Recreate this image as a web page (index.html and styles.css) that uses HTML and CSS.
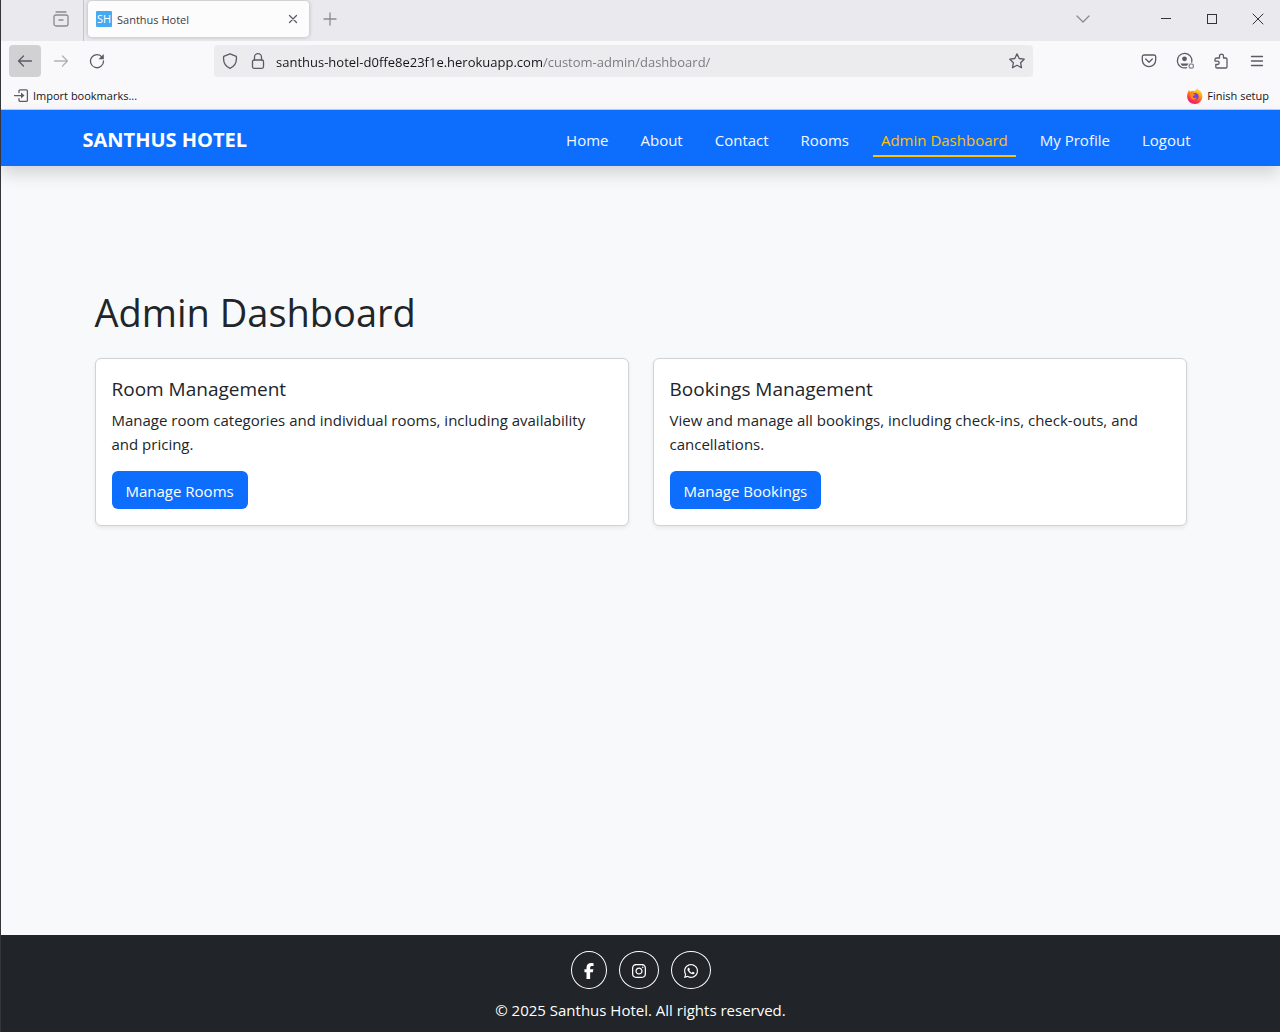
FILE: index.html
```html
<!DOCTYPE html>
<html lang="en">
<head>
<meta charset="utf-8">
<meta name="viewport" content="width=device-width, initial-scale=1">
<title>Santhus Hotel</title>
<link rel="stylesheet" href="styles.css">
</head>
<body>
<div class="browser">
  <div class="tabbar">
    <button class="view-btn" aria-label="Recent browsing"><svg class="icon muted" viewBox="0 0 16 16"><path d="M3 1H13"/><rect x="1" y="4" width="14" height="11" rx="2"/><path d="M6 9H10"/></svg></button>
    <div class="tab">
      <span class="favicon">SH</span>
      <span class="tab-title">Santhus Hotel</span>
      <button class="tab-close" aria-label="Close tab"><svg class="icon" viewBox="0 0 16 16"><path d="M4.500 4.500l7 7M11.500 4.500l-7 7"/></svg></button>
    </div>
    <button class="tool-btn" aria-label="New tab"><svg class="icon muted" viewBox="0 0 16 16"><path d="M8 2v12M2 8h12"/></svg></button>
    <button class="tool-btn list-btn" aria-label="List all tabs"><svg class="icon muted" viewBox="0 0 16 16"><path d="M2 5l6 6 6-6"/></svg></button>
    <div class="window-buttons">
      <button aria-label="Minimize"><svg class="icon crisp" viewBox="0 0 16 16"><path d="M3 7.500h10"/></svg></button>
      <button aria-label="Maximize"><svg class="icon crisp" viewBox="0 0 16 16"><rect x="3.500" y="3.500" width="9" height="9"/></svg></button>
      <button aria-label="Close"><svg class="icon thin" viewBox="0 0 16 16"><path d="M3 3l10 10M13 3L3 13"/></svg></button>
    </div>
  </div>
  <div class="toolbar">
    <div class="tools">
      <button class="tool-btn pressed" aria-label="Back"><svg class="icon" viewBox="0 0 16 16"><path d="M14.500 8H1.500M6.500 3L1.500 8l5 5"/></svg></button>
      <button class="tool-btn disabled" aria-label="Forward" disabled><svg class="icon" viewBox="0 0 16 16"><path d="M1.500 8h13M9.500 3l5 5-5 5"/></svg></button>
      <button class="tool-btn" aria-label="Reload"><svg class="icon" viewBox="0 0 16 16"><path d="M13.200 4.300A6.500 6.500 0 1 0 14.500 8"/><path class="solid" d="M14.800 1v5.300H9.500z"/></svg></button>
    </div>
    <div class="urlbar">
      <svg class="icon" viewBox="0 0 16 16"><path d="M8 .8l6.300 2.500c.7 5.500-1.500 10-6.300 12C3.200 13.300 1 8.800 1.700 3.300z"/></svg>
      <svg class="icon" viewBox="0 0 16 16"><rect x="2.500" y="7" width="11" height="8.300" rx="1.500"/><path d="M4.500 7V4.200a3.500 3.500 0 0 1 7 0V7"/></svg>
      <input class="url" type="text" aria-label="Address" value="santhus-hotel-d0ffe8e23f1e.herokuapp.com/custom-admin/dashboard/">
      <svg class="icon" viewBox="0 0 16 16"><path d="M8 .9l2.200 4.600 5 .7-3.600 3.500.9 5L8 12.300l-4.500 2.400.9-5L.8 6.200l5-.7z"/></svg>
    </div>
    <div class="tools">
      <button class="tool-btn" aria-label="Save to Pocket"><svg class="icon" viewBox="0 0 16 16"><path d="M3 2h10a1.700 1.700 0 0 1 1.700 1.700V7a6.700 6.700 0 0 1-13.400 0V3.700A1.700 1.700 0 0 1 3 2z"/><path d="M4.700 6L8 9.200 11.300 6"/></svg></button>
      <button class="tool-btn" aria-label="Account"><svg class="icon account" viewBox="0 0 18 18"><path d="M10.500 15.700A7.300 7.300 0 1 1 15.800 10"/><circle class="solid" cx="8.500" cy="6.800" r="2.400"/><path class="solid" d="M4.500 11.500h8l-1.500 2.300H6z"/><circle class="muted" cx="15.300" cy="14" r="2.200"/></svg></button>
      <button class="tool-btn" aria-label="Extensions"><svg class="icon" viewBox="0 0 16 16"><path d="M4 5h2.500V3.200a2 2 0 0 1 4 0V5h2.300q1.200 0 1.200 1.200v7.600q0 1.200-1.200 1.200H4q-1.200 0-1.200-1.200v-2.300H4.500a1.700 1.700 0 0 0 0-3.400H2V6.200Q2 5 4 5z"/></svg></button>
      <button class="tool-btn" aria-label="Menu"><svg class="icon" viewBox="0 0 16 16"><path d="M2.500 3.500h11M2.500 8h11M2.500 12.500h11"/></svg></button>
    </div>
  </div>
  <div class="bookmarks">
    <button class="bookmark"><svg class="icon" viewBox="0 0 16 16"><path d="M6 4.500V3q0-1.200 1.200-1.200h6q1.200 0 1.200 1.200v9.200q0 1.200-1.200 1.200h-6q-1.200 0-1.200-1.200V10.700M1.500 7.600h8"/><path class="solid" d="M8 4.600l3.500 3-3.500 3z"/></svg>Import bookmarks...</button>
    <button class="bookmark"><svg class="firefox" viewBox="0 0 16 16">
      <defs><linearGradient id="flame" x1="0.8" y1="0" x2="0.3" y2="1"><stop offset="0" stop-color="#fff44f"/><stop offset=".4" stop-color="#ff980e"/><stop offset=".75" stop-color="#ff3647"/><stop offset="1" stop-color="#e31587"/></linearGradient></defs>
      <path fill="url(#flame)" d="M10 0c1 1.500 3 2.200 4.500 4.500C17 10 13.500 16 8 16 3 16-.5 12 .2 7 .4 4.500 1.500 3 2.200 1.700c.2 1 .4 1.500.8 2C4.200 2.800 5.800 2.700 7 3c1.500-.2 2.700-1.400 3-3z"/>
      <circle cx="8" cy="8.500" r="3.600" fill="#7542e5"/><path fill="#ff8a16" d="M3.300 5.500c2-.7 3.500.2 4.700 1.200-.5 1-2.300.7-2.200 2 .5 1.500 2.500 1.700 4 .8C9 12.500 5 12.500 3.800 10z"/></svg>Finish setup</button>
  </div>
</div>
<header class="navbar">
  <div class="container">
    <a class="brand" href="#">SANTHUS HOTEL</a>
    <nav class="nav">
      <a href="#">Home</a>
      <a href="#">About</a>
      <a href="#">Contact</a>
      <a href="#">Rooms</a>
      <a class="active" href="#" aria-current="page">Admin Dashboard</a>
      <a href="#">My Profile</a>
      <a href="#">Logout</a>
    </nav>
  </div>
</header>
<main class="main">
  <h1>Admin Dashboard</h1>
  <div class="cards">
    <section class="card">
      <h2>Room Management</h2>
      <p>Manage room categories and individual rooms, including availability and pricing.</p>
      <a class="btn" href="#">Manage Rooms</a>
    </section>
    <section class="card">
      <h2>Bookings Management</h2>
      <p>View and manage all bookings, including check-ins, check-outs, and cancellations.</p>
      <a class="btn" href="#">Manage Bookings</a>
    </section>
  </div>
</main>
<footer class="footer">
  <div class="social">
    <a href="#" aria-label="Facebook"><svg width="10" height="16" viewBox="0 0 320 512"><path d="M80 299.3V512H196V299.3h86.500l18-97.800H196V166.900c0-51.700 20.300-71.500 72.700-71.500c16.300 0 29.400 .4 37 1.200V7.900C291.400 4 256.400 0 236.200 0C129.300 0 80 50.500 80 159.400v42.100H14v97.800H80z"/></svg></a>
    <a href="#" aria-label="Instagram"><svg width="14" height="16" viewBox="0 0 448 512"><path d="M224.100 141c-63.600 0-114.900 51.300-114.900 114.900s51.300 114.900 114.900 114.900S339 319.500 339 255.900 287.700 141 224.100 141zm0 189.600c-41.100 0-74.700-33.500-74.700-74.700s33.500-74.700 74.700-74.700 74.700 33.500 74.700 74.700-33.600 74.700-74.700 74.700zm146.400-194.300c0 14.900-12 26.800-26.800 26.800-14.900 0-26.800-12-26.800-26.800s12-26.800 26.800-26.800 26.800 12 26.800 26.800zm76.100 27.200c-1.700-35.900-9.900-67.700-36.200-93.900-26.200-26.200-58-34.400-93.900-36.200-37-2.100-147.900-2.100-184.900 0-35.800 1.700-67.600 9.900-93.900 36.100s-34.400 58-36.200 93.900c-2.100 37-2.100 147.900 0 184.900 1.700 35.900 9.900 67.700 36.200 93.900s58 34.400 93.900 36.200c37 2.100 147.900 2.100 184.900 0 35.900-1.700 67.700-9.900 93.900-36.200 26.200-26.200 34.400-58 36.200-93.900 2.100-37 2.100-147.800 0-184.800zM398.800 388c-7.800 19.600-22.900 34.700-42.600 42.600-29.500 11.700-99.500 9-132.100 9s-102.700 2.600-132.100-9c-19.600-7.800-34.700-22.900-42.600-42.600-11.700-29.500-9-99.500-9-132.100s-2.600-102.700 9-132.100c7.800-19.600 22.900-34.700 42.600-42.600 29.500-11.700 99.500-9 132.100-9s102.700-2.600 132.100 9c19.600 7.800 34.700 22.900 42.600 42.600 11.700 29.500 9 99.500 9 132.100s2.700 102.700-9 132.100z"/></svg></a>
    <a href="#" aria-label="WhatsApp"><svg width="14" height="16" viewBox="0 0 448 512"><path d="M380.900 97.100C339 55.100 283.200 32 223.900 32c-122.400 0-222 99.600-222 222 0 39.100 10.200 77.300 29.600 111L0 480l117.700-30.900c32.400 17.700 68.900 27 106.100 27h.1c122.300 0 224.100-99.600 224.100-222 0-59.300-25.200-115-67.100-157zm-157 341.600c-33.200 0-65.700-8.900-94-25.700l-6.700-4-69.800 18.300L72 359.200l-4.400-7c-18.500-29.400-28.200-63.300-28.200-98.200 0-101.700 82.800-184.500 184.600-184.500 49.300 0 95.600 19.200 130.400 54.100 34.800 34.900 56.200 81.200 56.100 130.500 0 101.800-84.900 184.600-186.600 184.600zm101.200-138.200c-5.500-2.800-32.800-16.200-37.900-18-5.100-1.900-8.800-2.800-12.500 2.800-3.700 5.600-14.300 18-17.600 21.800-3.200 3.700-6.500 4.200-12 1.400-32.600-16.300-54-29.100-75.500-66-5.700-9.800 5.700-9.100 16.300-30.300 1.800-3.700.9-6.900-.5-9.700-1.400-2.800-12.500-30.100-17.100-41.200-4.500-10.800-9.100-9.300-12.500-9.500-3.200-.2-6.900-.2-10.600-.2-3.700 0-9.700 1.400-14.800 6.900-5.100 5.600-19.400 19-19.400 46.300 0 27.300 19.900 53.700 22.600 57.400 2.800 3.700 39.100 59.700 94.800 83.800 35.200 15.200 49 16.500 66.600 13.900 10.700-1.600 32.800-13.400 37.400-26.400 4.600-13 4.600-24.100 3.200-26.400-1.300-2.500-5-3.900-10.500-6.600z"/></svg></a>
  </div>
  <p>© 2025 Santhus Hotel. All rights reserved.</p>
</footer>
</body>
</html>
```

FILE: styles.css
```css
* { box-sizing: border-box; }

body {
  margin: 0;
  min-height: 100vh;
  display: flex;
  flex-direction: column;
  border-left: 1px solid #34353a;
  background: #f8f9fa;
  color: #212529;
  font-family: "Open Sans", "Noto Sans", sans-serif;
  font-size: 15px;
  line-height: 24px;
}

a { color: inherit; text-decoration: none; }
h1, h2, p { margin: 0; }

button {
  border: 0;
  padding: 0;
  background: none;
  color: inherit;
  font: inherit;
}

/* Browser window */
.browser {
  background: #f9f9fb;
  border-bottom: 1px solid #ccccce;
  color: #15141a;
  font-size: 11px;
}

.icon {
  width: 16px;
  height: 16px;
  flex: none;
  display: block;
  fill: none;
  stroke: #5b5b66;
  stroke-width: 1.3;
  stroke-linejoin: round;
  stroke-linecap: round;
}
.icon.muted, .icon .muted { stroke: #8b8a93; }
.icon.crisp, .icon.thin { stroke: #333; stroke-width: 1; }
.icon.crisp { shape-rendering: crispEdges; stroke-linecap: butt; stroke-linejoin: miter; }
.icon .solid { fill: #5b5b66; stroke: none; }
.icon.account { width: 18px; height: 18px; }

.tabbar {
  display: flex;
  align-items: center;
  height: 41px;
  padding-bottom: 3px;
  background: #eae9ee;
}
.view-btn {
  align-self: stretch;
  width: 83px;
  margin-bottom: -3px;
  padding: 0 14px 3px 0;
  border-right: 1px solid #c4c3ca;
  display: flex;
  align-items: center;
  justify-content: flex-end;
}
.tab {
  display: flex;
  align-items: center;
  gap: 5px;
  width: 221px;
  height: 36px;
  margin: 0 5px 0 4px;
  padding: 0 8px;
  border-radius: 4px;
  background: #fcfcfd;
  box-shadow: 0 0 4px rgba(0, 0, 0, .25);
}
.favicon {
  width: 16px;
  height: 16px;
  border-radius: 1px;
  background: #45aaf2;
  color: #fff;
  line-height: 16px;
  text-align: center;
}
.tab-title { flex: 1; padding-top: 2px; color: #3c3b43; }
.tool-btn {
  display: flex;
  align-items: center;
  justify-content: center;
  width: 32px;
  height: 32px;
  border-radius: 4px;
}
.list-btn { margin-left: auto; margin-right: 44px; }
.window-buttons { display: flex; margin-right: -1px; }
.window-buttons button {
  display: flex;
  align-items: center;
  justify-content: center;
  width: 46px;
  height: 32px;
}

.toolbar {
  display: flex;
  align-items: center;
  height: 40px;
  padding: 0 7px 0 8px;
}
.tools { display: flex; gap: 4px; }
.pressed { background: #d1d1d4; }
.disabled { opacity: .45; }
.urlbar {
  flex: 1;
  display: flex;
  align-items: center;
  gap: 12px;
  height: 32px;
  margin: 0 100px 0 101px;
  padding: 0 8px;
  border-radius: 4px;
  background: #ececee;
}
.url {
  flex: 1;
  min-width: 0;
  border: 0;
  padding: 2px 0 0;
  margin-left: -2px;
  font: 13px/24px "Open Sans", "Noto Sans", sans-serif;
  color: #15141a;
  /* Domain in full ink, path dimmed */
  background: linear-gradient(90deg, #15141a 267px, #77767d 267px);
  -webkit-background-clip: text;
  background-clip: text;
  -webkit-text-fill-color: transparent;
}

.bookmarks {
  display: flex;
  align-items: center;
  justify-content: space-between;
  height: 28px;
  padding: 2px 11px 0 12px;
}
.bookmark {
  display: flex;
  align-items: center;
  gap: 4px;
}
.firefox { width: 16px; height: 16px; }

/* Site header */
.navbar {
  position: relative;
  background: #0d6efd;
  box-shadow: 0 8px 16px rgba(0, 0, 0, .15);
}
.container {
  display: flex;
  align-items: center;
  justify-content: space-between;
  max-width: 1140px;
  height: 56px;
  margin: 0 auto;
  padding: 0 12px;
}
.brand {
  padding-top: 4px;
  color: #fff;
  font-size: 20px;
  font-weight: 700;
}
.nav { display: flex; gap: 16px; }
.nav a {
  padding: 9px 8px 3px;
  border-bottom: 2px solid transparent;
  color: #f3f7ff;
}
.nav a.active { color: #ffc107; border-color: #ffc107; }

/* Dashboard */
.main {
  flex: 1;
  width: 100%;
  max-width: 1140px;
  margin: 0 auto;
  padding: 124px 24px 48px;
}
.main h1 {
  font-size: 38px;
  font-weight: 400;
  line-height: 44px;
}
.cards {
  display: grid;
  grid-template-columns: 1fr 1fr;
  gap: 24px;
  margin-top: 24px;
}
.card {
  padding: 16px;
  border: 1px solid #d0d2d4;
  border-radius: 6px;
  background: #fff;
  box-shadow: 0 2px 4px rgba(0, 0, 0, .075);
}
.card h2 {
  font-size: 19px;
  font-weight: 400;
  line-height: 28px;
}
.card p { margin: 5px 0 15px; }
.btn {
  display: inline-block;
  padding: 8px 14px 6px;
  border-radius: 6px;
  background: #0d6efd;
  color: #fff;
  vertical-align: top;
}

/* Site footer */
.footer {
  padding: 16px 16px 10px;
  background: #212529;
  color: #fff;
  text-align: center;
}
.social {
  display: flex;
  justify-content: center;
  gap: 12px;
  margin-bottom: 9px;
}
.social a {
  display: flex;
  align-items: center;
  height: 38px;
  padding: 2px 12px 0;
  border: 1px solid #fff;
  border-radius: 50%;
}
.social svg { fill: #fff; }
```
